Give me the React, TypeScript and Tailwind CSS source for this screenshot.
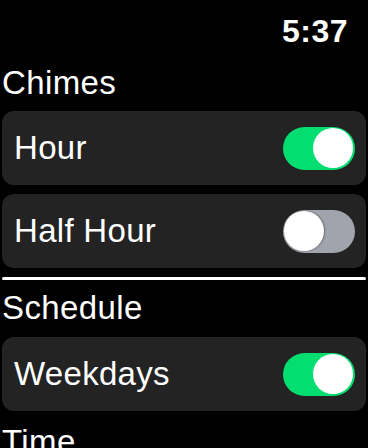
function Toggle({ on }: { on: boolean }) {
  return (
    <div
      className={
        on
          ? 'relative h-[43px] w-[72px] shrink-0 rounded-full bg-[#04de71]'
          : 'relative h-[43px] w-[72px] shrink-0 rounded-full bg-[#a2a4ad]'
      }
    >
      <div
        className={
          on
            ? 'absolute top-[1.5px] right-[2px] h-[40px] w-[40px] rounded-full bg-white'
            : 'absolute top-[1.5px] left-[1px] h-[40px] w-[40px] rounded-full bg-white shadow-[1px_0_2px_rgba(0,0,0,0.35)]'
        }
      />
    </div>
  );
}

function Row({ label, on }: { label: string; on: boolean }) {
  return (
    <div className="mx-[2px] flex h-[74px] items-center justify-between rounded-[12px] bg-[#232323] pl-[12px] pr-[11px]">
      <span className="text-[33px] leading-[40px] tracking-[0.3px] text-white">{label}</span>
      <Toggle on={on} />
    </div>
  );
}

function SectionTitle({ children }: { children: string }) {
  return (
    <div className="px-[2px] text-[33px] leading-[40px] tracking-[0.4px] text-white">
      {children}
    </div>
  );
}

export default function App() {
  return (
    <div
      className="h-[448px] w-[368px] overflow-hidden bg-black"
      style={{ fontFamily: '"Liberation Sans", Arial, sans-serif' }}
    >
      <div className="flex justify-end pr-[20px] pt-[13px]">
        <span className="text-[32px] font-bold leading-[37px] tracking-[0.5px] text-white">5:37</span>
      </div>
      <div className="mt-[13px]">
        <SectionTitle>Chimes</SectionTitle>
      </div>
      <div className="mt-[8px] flex flex-col gap-[9px]">
        <Row label="Hour" on={true} />
        <Row label="Half Hour" on={false} />
      </div>
      <div className="mx-[2px] mt-[9px] h-[3px] rounded-full bg-white" />
      <div className="mt-[8px]">
        <SectionTitle>Schedule</SectionTitle>
      </div>
      <div className="mt-[9px]">
        <Row label="Weekdays" on={true} />
      </div>
      <div className="mt-[11px]">
        <SectionTitle>Time</SectionTitle>
      </div>
    </div>
  );
}
